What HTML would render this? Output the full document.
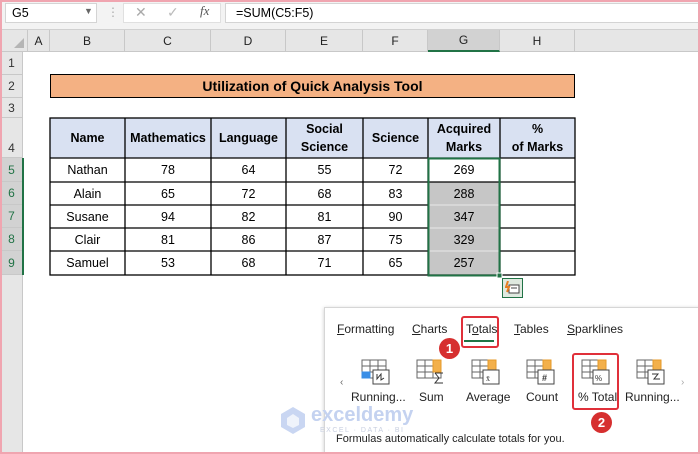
<!DOCTYPE html>
<html><head><meta charset="utf-8"><style>
*{box-sizing:border-box;margin:0;padding:0}
body{width:700px;height:454px;position:relative;overflow:hidden;background:#fff;font-family:"Liberation Sans",sans-serif;}
.a{position:absolute}
.c{position:absolute;display:flex;align-items:center;justify-content:center;text-align:center;font-size:12.5px;color:#000;line-height:18px}
.hd{position:absolute;top:30px;height:22px;font-size:12px;color:#222;display:flex;align-items:center;justify-content:center;border-right:1px solid #c8c8c8}
.rn{position:absolute;left:0;width:28px;font-size:12px;color:#333;display:flex;align-items:center;justify-content:center;border-bottom:1px solid #c8c8c8}
.ic{position:absolute;top:359px;width:26px;height:26px}
.lb{position:absolute;top:390px;font-size:12px;color:#222;white-space:nowrap}
</style></head><body>
<!-- formula bar -->
<div class="a" style="left:0;top:0;width:700px;height:30px;background:#f3f3f3;border-bottom:1px solid #d0d0d0"></div>
<div class="a" style="left:5px;top:3px;width:92px;height:20px;background:#fff;border:1px solid #d4d4d4;font-size:12.5px;padding:2px 6px">G5</div>
<div class="a" style="left:84px;top:6px;font-size:9px;color:#666">▼</div>
<div class="a" style="left:107px;top:5px;color:#aaa;font-size:12px">⋮</div>
<div class="a" style="left:123px;top:3px;width:98px;height:20px;background:#fff;border:1px solid #e0e0e0"></div>
<div class="a" style="left:135px;top:4px;color:#aaa;font-size:14px">✕</div>
<div class="a" style="left:167px;top:4px;color:#bbb;font-size:14px">✓</div>
<div class="a" style="left:200px;top:3px;color:#555;font-size:13px;font-style:italic;font-family:'Liberation Serif',serif">fx</div>
<div class="a" style="left:225px;top:3px;width:475px;height:20px;background:#fff;border:1px solid #d4d4d4;font-size:12.5px;padding:2px 10px">=SUM(C5:F5)</div>
<!-- column header -->
<div class="a" style="left:0;top:30px;width:700px;height:22px;background:#e6e6e6;border-bottom:1px solid #c8c8c8"></div>
<div class="a" style="left:0;top:30px;width:28px;height:22px;border-right:1px solid #c8c8c8"></div>
<div class="a" style="left:14px;top:38px;width:0;height:0;border-left:10px solid transparent;border-bottom:10px solid #b5b5b5"></div>
<div class="hd" style="left:28px;width:22px">A</div>
<div class="hd" style="left:50px;width:75px">B</div>
<div class="hd" style="left:125px;width:86px">C</div>
<div class="hd" style="left:211px;width:75px">D</div>
<div class="hd" style="left:286px;width:77px">E</div>
<div class="hd" style="left:363px;width:65px">F</div>
<div class="hd" style="left:428px;width:72px;background:#d2d2d2;border-bottom:2px solid #217346">G</div>
<div class="hd" style="left:500px;width:75px">H</div>
<!-- row header -->
<div class="a" style="left:0;top:52px;width:23px;height:402px;background:#e6e6e6;border-right:1px solid #c8c8c8"></div>
<div class="rn" style="top:52px;height:23px;width:23px">1</div>
<div class="rn" style="top:75px;height:23px;width:23px">2</div>
<div class="rn" style="top:98px;height:20px;width:23px">3</div>
<div class="rn" style="top:118px;height:40px;width:23px;align-items:flex-end;padding-bottom:2px">4</div>
<div class="rn" style="top:158px;height:24px;width:23px;background:#d2d2d2;color:#217346">5</div>
<div class="rn" style="top:182px;height:23px;width:23px;background:#d2d2d2;color:#217346">6</div>
<div class="rn" style="top:205px;height:23px;width:23px;background:#d2d2d2;color:#217346">7</div>
<div class="rn" style="top:228px;height:23px;width:23px;background:#d2d2d2;color:#217346">8</div>
<div class="rn" style="top:251px;height:24px;width:23px;background:#d2d2d2;color:#217346">9</div>
<div class="a" style="left:22px;top:158px;width:2px;height:117px;background:#217346"></div>
<!-- title -->
<div class="c" style="left:50px;top:74px;width:525px;height:24px;background:#f4b183;border:1.5px solid #000;font-weight:bold;font-size:14px">Utilization of Quick Analysis Tool</div>
<!-- table -->
<svg class="a" style="left:0;top:0" width="700" height="454">
<rect x="50" y="118" width="525" height="40" fill="#d9e1f2"/>
<rect x="429" y="182" width="71" height="93" fill="#c6c6c6"/>
<g stroke="#000" stroke-width="1.3" fill="none">
<rect x="50" y="118" width="525" height="157"/>
<line x1="50" y1="158" x2="575" y2="158"/><line x1="50" y1="182" x2="575" y2="182"/>
<line x1="50" y1="205" x2="575" y2="205"/><line x1="50" y1="228" x2="575" y2="228"/>
<line x1="50" y1="251" x2="575" y2="251"/>
<line x1="125" y1="118" x2="125" y2="275"/><line x1="211" y1="118" x2="211" y2="275"/>
<line x1="286" y1="118" x2="286" y2="275"/><line x1="363" y1="118" x2="363" y2="275"/>
<line x1="428" y1="118" x2="428" y2="275"/><line x1="500" y1="118" x2="500" y2="275"/>
</g>
<g stroke="#fff" stroke-width="1.3"><line x1="429" y1="205" x2="500" y2="205"/><line x1="429" y1="228" x2="500" y2="228"/><line x1="429" y1="251" x2="500" y2="251"/></g>
<rect x="428.5" y="158.5" width="71" height="117" stroke="#217346" stroke-width="2" fill="none"/>
<rect x="497" y="273" width="5" height="5" fill="#217346" stroke="#fff"/>
</svg>
<div class="c" style="left:50px;top:118px;width:75px;height:40px;font-weight:bold">Name</div>
<div class="c" style="left:125px;top:118px;width:86px;height:40px;font-weight:bold">Mathematics</div>
<div class="c" style="left:211px;top:118px;width:75px;height:40px;font-weight:bold">Language</div>
<div class="c" style="left:286px;top:118px;width:77px;height:40px;font-weight:bold">Social<br>Science</div>
<div class="c" style="left:363px;top:118px;width:65px;height:40px;font-weight:bold">Science</div>
<div class="c" style="left:428px;top:118px;width:72px;height:40px;font-weight:bold">Acquired<br>Marks</div>
<div class="c" style="left:500px;top:118px;width:75px;height:40px;font-weight:bold">%<br>of Marks</div>
<div id="rows"></div>
<div class="c" style="left:50px;top:158px;width:75px;height:24px">Nathan</div><div class="c" style="left:125px;top:158px;width:86px;height:24px">78</div><div class="c" style="left:211px;top:158px;width:75px;height:24px">64</div><div class="c" style="left:286px;top:158px;width:77px;height:24px">55</div><div class="c" style="left:363px;top:158px;width:65px;height:24px">72</div><div class="c" style="left:428px;top:158px;width:72px;height:24px">269</div>
<div class="c" style="left:50px;top:182px;width:75px;height:23px">Alain</div><div class="c" style="left:125px;top:182px;width:86px;height:23px">65</div><div class="c" style="left:211px;top:182px;width:75px;height:23px">72</div><div class="c" style="left:286px;top:182px;width:77px;height:23px">68</div><div class="c" style="left:363px;top:182px;width:65px;height:23px">83</div><div class="c" style="left:428px;top:182px;width:72px;height:23px">288</div>
<div class="c" style="left:50px;top:205px;width:75px;height:23px">Susane</div><div class="c" style="left:125px;top:205px;width:86px;height:23px">94</div><div class="c" style="left:211px;top:205px;width:75px;height:23px">82</div><div class="c" style="left:286px;top:205px;width:77px;height:23px">81</div><div class="c" style="left:363px;top:205px;width:65px;height:23px">90</div><div class="c" style="left:428px;top:205px;width:72px;height:23px">347</div>
<div class="c" style="left:50px;top:228px;width:75px;height:23px">Clair</div><div class="c" style="left:125px;top:228px;width:86px;height:23px">81</div><div class="c" style="left:211px;top:228px;width:75px;height:23px">86</div><div class="c" style="left:286px;top:228px;width:77px;height:23px">87</div><div class="c" style="left:363px;top:228px;width:65px;height:23px">75</div><div class="c" style="left:428px;top:228px;width:72px;height:23px">329</div>
<div class="c" style="left:50px;top:251px;width:75px;height:24px">Samuel</div><div class="c" style="left:125px;top:251px;width:86px;height:24px">53</div><div class="c" style="left:211px;top:251px;width:75px;height:24px">68</div><div class="c" style="left:286px;top:251px;width:77px;height:24px">71</div><div class="c" style="left:363px;top:251px;width:65px;height:24px">65</div><div class="c" style="left:428px;top:251px;width:72px;height:24px">257</div>
<!-- QA button -->
<div class="a" style="left:502px;top:278px;width:21px;height:20px;background:#dfe9df;border:1px solid #217346"></div>
<svg class="a" style="left:505px;top:281px" width="15" height="14"><rect x="4" y="4" width="10" height="8" fill="#fff" stroke="#444"/><line x1="6" y1="7" x2="12" y2="7" stroke="#444"/><path d="M3 0 L1 6 L4 6 L2 11" stroke="#e67e22" stroke-width="2" fill="none"/></svg>
<!-- popup -->
<div class="a" style="left:324px;top:307px;width:376px;height:147px;background:#fff;border:1px solid #d6d6d6;box-shadow:0 1px 4px rgba(0,0,0,.2)"></div>
<div class="a" style="left:337px;top:322px;font-size:12px;color:#222"><u>F</u>ormatting</div>
<div class="a" style="left:412px;top:322px;font-size:12px;color:#222"><u>C</u>harts</div>
<div class="a" style="left:466px;top:322px;font-size:12px;color:#222">T<u>o</u>tals</div>
<div class="a" style="left:464px;top:340px;width:30px;height:2px;background:#217346"></div>
<div class="a" style="left:461px;top:316px;width:38px;height:32px;border:2px solid #e0303a;border-radius:3px"></div>
<div class="a" style="left:514px;top:322px;font-size:12px;color:#222"><u>T</u>ables</div>
<div class="a" style="left:567px;top:322px;font-size:12px;color:#222"><u>S</u>parklines</div>
<div class="a" style="left:439px;top:338px;width:21px;height:21px;border-radius:50%;background:#d62f2f;color:#fff;font-size:13px;font-weight:bold;display:flex;align-items:center;justify-content:center">1</div>
<div class="a" style="left:340px;top:377px;font-size:10px;color:#666">‹</div>
<div class="a" style="left:681px;top:377px;font-size:10px;color:#aaa">›</div>
<!-- icons -->
<svg class="a" style="left:360px;top:358px" width="330" height="30">
<g fill="#fff" stroke="#666" stroke-width="1">
<g transform="translate(2,2)"><rect x="0" y="0" width="24" height="18"/><line x1="0" y1="6" x2="24" y2="6"/><line x1="0" y1="12" x2="24" y2="12"/><line x1="8" y1="0" x2="8" y2="18"/><line x1="16" y1="0" x2="16" y2="18"/><rect x="0" y="12" width="8" height="6" fill="#3a8ee6" stroke="#3a8ee6"/><rect x="11" y="10" width="16" height="14" fill="#fff" stroke="#444"/><path d="M15 14 L15 19 L19 14 L19 20 L22 18" stroke="#333"/></g>
<g transform="translate(57,2)"><rect x="0" y="0" width="24" height="18"/><line x1="0" y1="6" x2="24" y2="6"/><line x1="0" y1="12" x2="24" y2="12"/><line x1="8" y1="0" x2="8" y2="18"/><line x1="16" y1="0" x2="16" y2="18"/><rect x="16" y="0" width="8" height="12" fill="#f3b04b" stroke="#e69a2a"/><path d="M18 13 L26 13 M18 13 L22 18 L18 23 L26 23" stroke="#333" fill="none"/></g>
<g transform="translate(112,2)"><rect x="0" y="0" width="24" height="18"/><line x1="0" y1="6" x2="24" y2="6"/><line x1="0" y1="12" x2="24" y2="12"/><line x1="8" y1="0" x2="8" y2="18"/><line x1="16" y1="0" x2="16" y2="18"/><rect x="16" y="0" width="8" height="12" fill="#f3b04b" stroke="#e69a2a"/><rect x="11" y="10" width="16" height="14" stroke="#444"/></g>
<g transform="translate(167,2)"><rect x="0" y="0" width="24" height="18"/><line x1="0" y1="6" x2="24" y2="6"/><line x1="0" y1="12" x2="24" y2="12"/><line x1="8" y1="0" x2="8" y2="18"/><line x1="16" y1="0" x2="16" y2="18"/><rect x="16" y="0" width="8" height="12" fill="#f3b04b" stroke="#e69a2a"/><rect x="11" y="10" width="16" height="14" stroke="#444"/></g>
<g transform="translate(222,2)"><rect x="0" y="0" width="24" height="18"/><line x1="0" y1="6" x2="24" y2="6"/><line x1="0" y1="12" x2="24" y2="12"/><line x1="8" y1="0" x2="8" y2="18"/><line x1="16" y1="0" x2="16" y2="18"/><rect x="16" y="0" width="8" height="12" fill="#f3b04b" stroke="#e69a2a"/><rect x="11" y="10" width="16" height="14" stroke="#444"/></g>
<g transform="translate(277,2)"><rect x="0" y="0" width="24" height="18"/><line x1="0" y1="6" x2="24" y2="6"/><line x1="0" y1="12" x2="24" y2="12"/><line x1="8" y1="0" x2="8" y2="18"/><line x1="16" y1="0" x2="16" y2="18"/><rect x="16" y="0" width="8" height="12" fill="#f3b04b" stroke="#e69a2a"/><rect x="11" y="10" width="16" height="14" stroke="#444"/><path d="M15 14 L21 14 L17 19 L23 19" stroke="#333" fill="none"/></g>
</g>
<text x="126" y="23" font-size="8" fill="#333" font-family="Liberation Serif">x̄</text>
<text x="182" y="23" font-size="9" fill="#333" font-weight="bold" font-family="Liberation Sans">#</text>
<text x="235" y="23" font-size="8" fill="#333" font-family="Liberation Sans">%</text>
</svg>
<div class="lb" style="left:351px">Running...</div>
<div class="lb" style="left:419px">Sum</div>
<div class="lb" style="left:466px">Average</div>
<div class="lb" style="left:526px">Count</div>
<div class="lb" style="left:578px">% Total</div>
<div class="lb" style="left:625px">Running...</div>
<div class="a" style="left:572px;top:353px;width:47px;height:57px;border:2px solid #e0303a;border-radius:3px"></div>
<div class="a" style="left:591px;top:412px;width:21px;height:21px;border-radius:50%;background:#d62f2f;color:#fff;font-size:13px;font-weight:bold;display:flex;align-items:center;justify-content:center">2</div>
<!-- watermark -->
<svg class="a" style="left:278px;top:405px" width="30" height="30"><path d="M15 2 L27 9 L27 22 L15 29 L3 22 L3 9Z" fill="#c9d6f2"/><path d="M15 9 L21 13 L21 20 L15 23 L9 20 L9 13Z" fill="#fff" opacity=".7"/></svg>
<div class="a" style="left:311px;top:404px;font-size:20px;font-weight:bold;color:#c4d2f0">exceldemy</div>
<div class="a" style="left:320px;top:427px;font-size:7px;color:#c8cfe0;letter-spacing:1.5px">EXCEL · DATA · BI</div>
<div class="a" style="left:336px;top:433px;font-size:11px;color:#222">Formulas automatically calculate totals for you.</div>
<!-- pink frame -->
<div class="a" style="left:0;top:0;width:700px;height:454px;border:2px solid #f0a5b0"></div>
</body></html>
